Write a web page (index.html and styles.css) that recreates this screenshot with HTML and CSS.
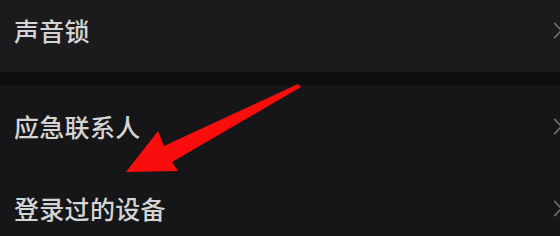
FILE: index.html
```html
<!DOCTYPE html>
<html lang="zh-CN">
<head>
    <meta charset="UTF-8">
    <meta name="viewport" content="width=device-width, initial-scale=1.0">
    <title>设置</title>
    <link rel="stylesheet" href="styles.css">
</head>
<body>
    <div class="settings">
        <div class="group top">
            <div class="row first">
                <span class="label">声音锁</span>
                <svg class="chevron" viewBox="0 0 10 18"><path d="M1.5 1.5 L8.5 9 L1.5 16.5"/></svg>
            </div>
        </div>
        <div class="gap"></div>
        <div class="group">
            <div class="row">
                <span class="label">应急联系人</span>
                <svg class="chevron" viewBox="0 0 10 18"><path d="M1.5 1.5 L8.5 9 L1.5 16.5"/></svg>
            </div>
            <div class="row last">
                <span class="label">登录过的设备</span>
                <svg class="chevron" viewBox="0 0 10 18"><path d="M1.5 1.5 L8.5 9 L1.5 16.5"/></svg>
            </div>
        </div>
    </div>
    <svg class="arrow" viewBox="0 0 560 236">
        <polygon points="126,172 158,131 164,146 298,84 301,87 172,162 178,171"/>
    </svg>
</body>
</html>
```

FILE: styles.css
```css
html, body {
    margin: 0;
    padding: 0;
    overflow: hidden;
}

body {
    position: relative;
    width: 560px;
    height: 236px;
    background-color: #161618;
    font-family: "Noto Sans CJK SC", "Noto Sans", sans-serif;
    color: #d4d4d4;
}

.settings {
    display: flex;
    flex-direction: column;
}

.group {
    background-color: #161618;
}

.group.top {
    background-color: #1b1b1d;
}

.gap {
    height: 13px;
    background-color: #0e0e10;
}

.row {
    display: flex;
    justify-content: space-between;
    align-items: flex-start;
    height: 82px;
    padding: 29px 0 0 14px;
    margin-right: -5px;
    box-sizing: border-box;
}

.row.first {
    height: 72px;
    padding-top: 18px;
}

.row.last {
    height: 66px;
}

.label {
    font-size: 25px;
    line-height: 25px;
    letter-spacing: 0.3px;
    font-weight: 500;
}

.chevron {
    width: 10px;
    height: 17px;
    margin-top: 4px;
    margin-right: 2px;
    fill: none;
    stroke: #6c6c6e;
    stroke-width: 1.8;
    stroke-linecap: round;
    stroke-linejoin: round;
}

.arrow {
    position: absolute;
    left: 0;
    top: 0;
    width: 560px;
    height: 236px;
}

.arrow polygon {
    fill: #fb0d0d;
}
```
